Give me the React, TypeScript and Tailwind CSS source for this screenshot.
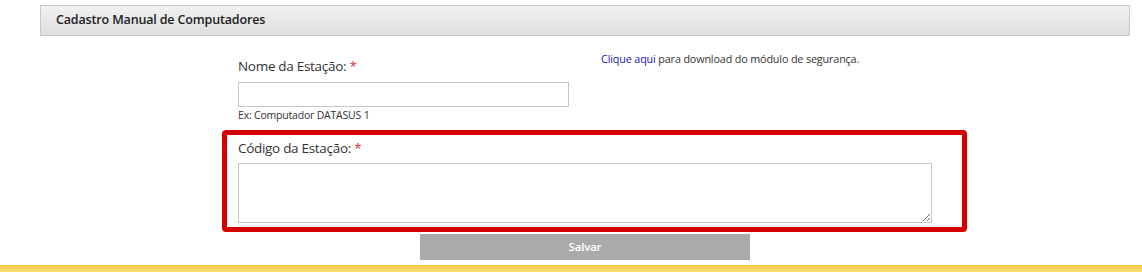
import React from "react";

const font = { fontFamily: '"Open Sans", "Noto Sans", sans-serif' };

export default function App() {
  return (
    <div className="w-[1142px] h-[272px] bg-white overflow-hidden text-[#222]" style={font}>
      {/* Panel header */}
      <div className="ml-[40px] mr-[12px] mt-[5px] h-[31px] border border-[#c9c9c9] bg-gradient-to-b from-[#f1f1f1] to-[#dedede] flex items-center pl-[15px]">
        <span className="text-[12.5px] font-semibold text-[#222] tracking-[-0.15px]">Cadastro Manual de Computadores</span>
      </div>

      {/* Nome + link */}
      <div className="flex h-[94px]">
        <div className="ml-[238px] w-[331px] pt-[21px]">
          <label className="block text-[13.5px] leading-[18px] text-[#333] tracking-[-0.3px]">
            Nome da Estação: <span className="text-[#e02b2b]">*</span>
          </label>
          <input type="text" className="block mt-[7px] w-[331px] h-[25px] border border-[#c6c6c6] bg-white outline-none" />
          <div className="mt-[1px] text-[10.5px] leading-[14px] text-[#333] tracking-[-0.2px]">Ex: Computador DATASUS 1</div>
        </div>
        <div className="ml-[32px] pt-[16px] text-[10.8px] leading-[14px] text-[#333] tracking-[-0.15px]">
          <a className="text-[#1a1ab0]">Clique aqui</a> para download do módulo de segurança.
        </div>
      </div>

      {/* Código (highlighted) */}
      <div className="ml-[222px] w-[745px] h-[102px] border-[5px] border-[#d40000] rounded-[4px] pl-[11px]">
        <label className="block mt-[4px] text-[13.5px] leading-[18px] text-[#333] tracking-[-0.3px]">
          Código da Estação: <span className="text-[#e02b2b]">*</span>
        </label>
        <textarea className="block mt-[6px] w-[694px] h-[60px] border border-[#c6c6c6] bg-white outline-none" />
      </div>

      {/* Salvar */}
      <button className="block ml-[420px] mt-[2px] w-[330px] h-[26px] bg-[#aaaaaa] text-white text-[11.5px] font-semibold tracking-[-0.2px]">
        Salvar
      </button>

      <div className="mt-[5px] h-[7px] bg-gradient-to-b from-[#f7c843] to-[#fde17a]" />
    </div>
  );
}
